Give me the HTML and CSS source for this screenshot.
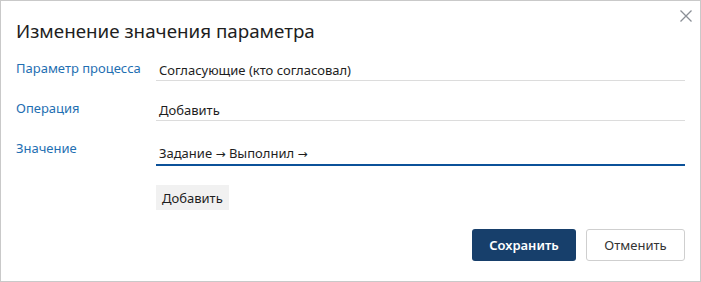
FILE: index.html
```html
<!DOCTYPE html>
<html lang="ru">

<head>
    <meta charset="UTF-8">
    <title>Изменение значения параметра</title>
    <link rel="stylesheet" href="styles.css">
</head>

<body>
    <div class="dialog">
        <!-- Заголовок -->
        <div class="dialog-header">
            <h1>Изменение значения параметра</h1>
            <button class="btn-close" title="Закрыть">
                <svg width="12" height="12" viewBox="0 0 12 12">
                    <path d="M0.5 0.5 L11.5 11.5 M11.5 0.5 L0.5 11.5" stroke="#8a8f96" stroke-width="1.3" fill="none" />
                </svg>
            </button>
        </div>

        <!-- Поля -->
        <div class="form">
            <div class="row">
                <label>Параметр процесса</label>
                <div class="field">Согласующие (кто согласовал)</div>
            </div>
            <div class="row">
                <label>Операция</label>
                <div class="field">Добавить</div>
            </div>
            <div class="row">
                <label>Значение</label>
                <div class="field field-active">Задание <span class="arrow">→</span> Выполнил <span class="arrow">→</span></div>
            </div>
            <div class="row row-add">
                <span></span>
                <div><button class="btn-add">Добавить</button></div>
            </div>
        </div>

        <!-- Кнопки -->
        <div class="dialog-footer">
            <button class="btn btn-primary">Сохранить</button>
            <button class="btn btn-default">Отменить</button>
        </div>
    </div>
</body>

</html>
```

FILE: styles.css
```css
* {
    box-sizing: border-box;
}

body {
    margin: 0;
    font-family: "Noto Sans", "Open Sans", sans-serif;
    font-size: 13px;
    color: #1e1e1e;
    background: #fff;
}

.dialog {
    width: 701px;
    height: 282px;
    border: 1px solid #c9c9c9;
    background: #fff;
    display: flex;
    flex-direction: column;
    padding: 0 15px 20px 15px;
}

.dialog-header {
    display: flex;
    justify-content: space-between;
    align-items: flex-start;
}

h1 {
    margin: 16px 0 0 0;
    font-size: 18.8px;
    font-weight: normal;
    line-height: 28px;
    color: #1e1e1e;
}

.btn-close {
    border: none;
    background: none;
    padding: 0;
    margin: 9px -7px 0 0;
    width: 12px;
    height: 12px;
    cursor: pointer;
}

.form {
    margin-top: 13px;
}

.row {
    display: grid;
    grid-template-columns: 140px 1fr;
    align-items: start;
    margin-bottom: 17px;
}

.row label {
    color: #1f6fb2;
    line-height: 20px;
}

.field {
    line-height: 20px;
    padding: 2px 0 0 3px;
    border-bottom: 1px solid #dcdcdc;
}

.field-active {
    padding-top: 5px;
    border-bottom: 2px solid #0b5199;
}

.arrow {
    font-family: "DejaVu Sans", sans-serif;
    font-size: 12px;
}

.row-add {
    padding-top: 2px;
}

.btn-add {
    font-family: inherit;
    font-size: 13px;
    color: #1e1e1e;
    background: #f1f1f1;
    border: none;
    padding: 1px 6px 0 6px;
    height: 25px;
    cursor: pointer;
}

.dialog-footer {
    margin-top: auto;
    display: flex;
    justify-content: flex-end;
    gap: 10px;
}

.btn {
    font-family: inherit;
    font-size: 13px;
    height: 32px;
    border-radius: 3px;
    cursor: pointer;
}

.btn-primary {
    width: 104px;
    background: #173f6b;
    color: #fff;
    border: none;
    font-weight: 600;
}

.btn-default {
    width: 99px;
    background: #fff;
    color: #333;
    border: 1px solid #cfcfcf;
}
```
